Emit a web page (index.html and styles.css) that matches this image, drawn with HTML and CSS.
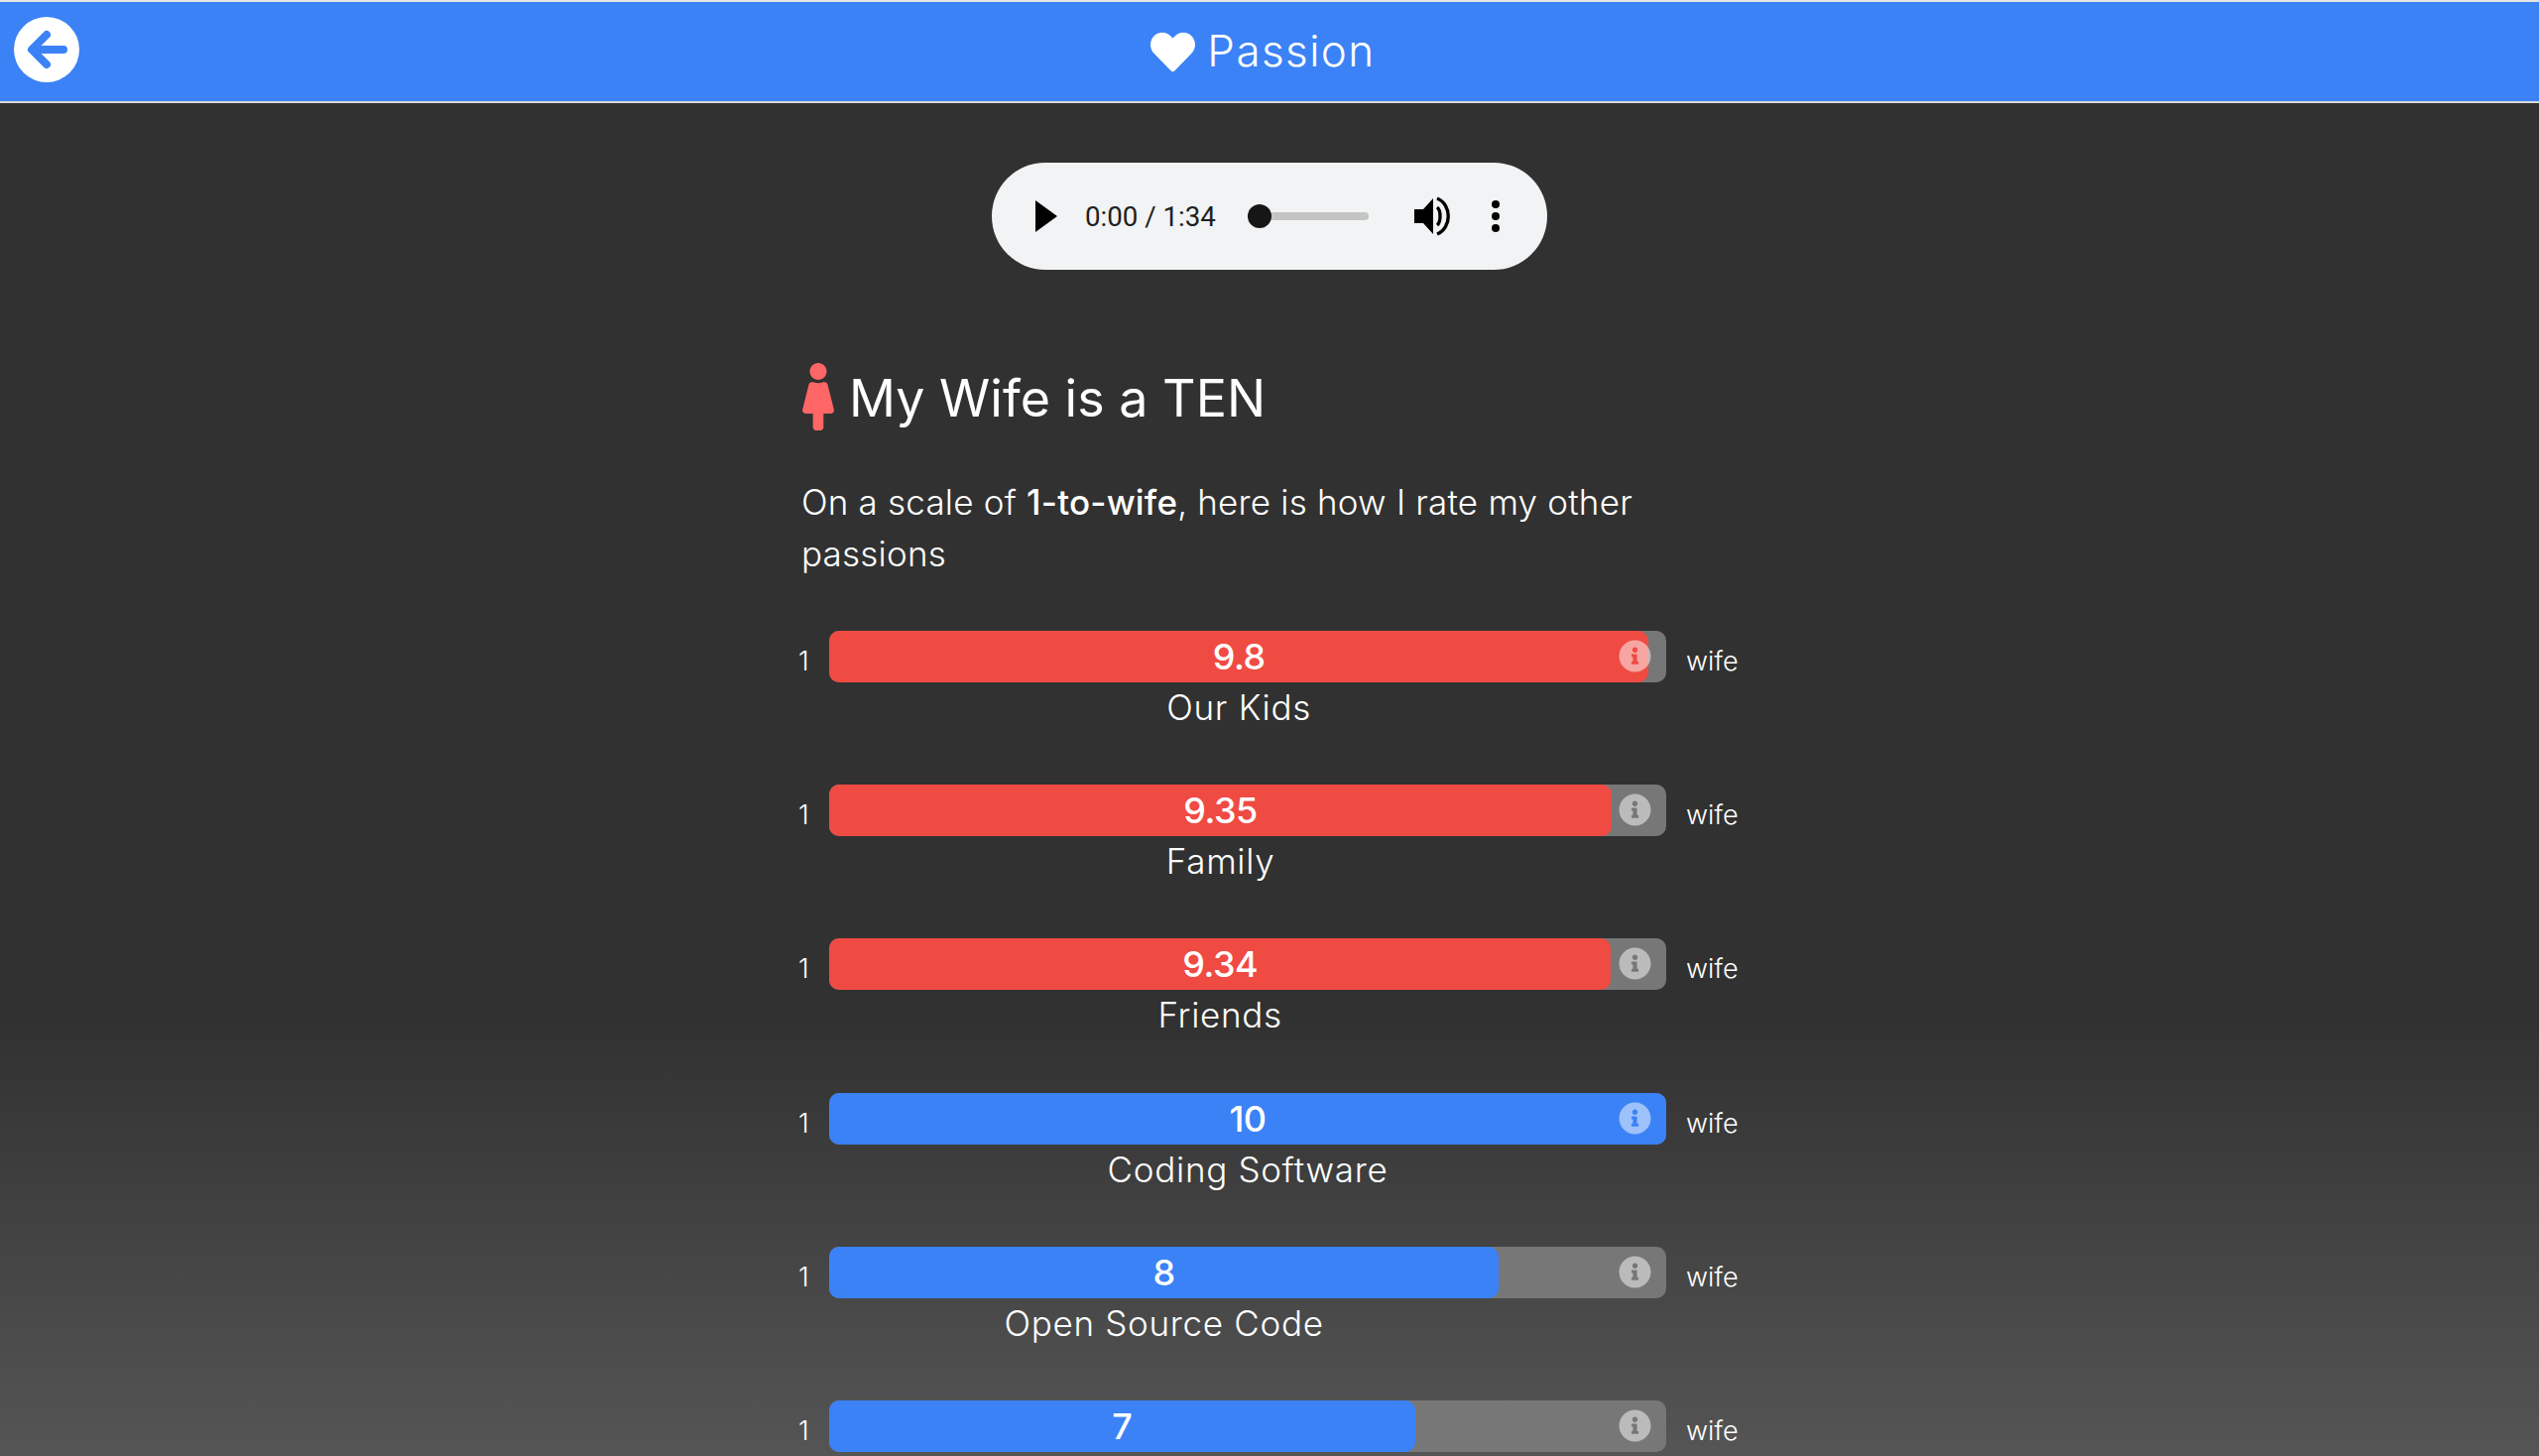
FILE: index.html
```html
<!DOCTYPE html>
<html>
<head>
    <title>Passion</title>
    <link rel="stylesheet" href="styles.css">
</head>
<body>
    <header class="topbar">
        <a class="back" href="#">
            <svg viewBox="0 0 66 66" width="66" height="66">
                <circle cx="33" cy="33" r="33" fill="#fff"/>
                <path d="M33 18 L18 33 L33 48 M19 33 H50" fill="none" stroke="#3b82f6" stroke-width="8" stroke-linecap="round" stroke-linejoin="round"/>
            </svg>
        </a>
        <h2 class="title">
            <svg viewBox="0 0 512 512" width="45" height="45"><path fill="#fff" d="M462.3 62.6C407.5 15.9 326 24.3 275.7 76.2L256 96.5l-19.7-20.3C186.1 24.3 104.5 15.9 49.7 62.6c-62.8 53.6-66.1 149.8-9.9 207.9l193.5 199.8c12.5 12.9 32.8 12.9 45.3 0l193.5-199.8c56.3-58.1 53-154.3-9.8-207.9z"/></svg>
            <span>Passion</span>
        </h2>
    </header>

    <div class="player">
        <svg class="play" viewBox="0 0 22 32" width="22" height="32"><path d="M0 0 L22 16 L0 32 Z" fill="#000"/></svg>
        <span class="time">0:00 / 1:34</span>
        <div class="seek"><div class="thumb"></div></div>
        <svg class="volume" viewBox="0 0 36 40" width="36" height="40">
            <path d="M0 13 H9 L19 2 V38 L9 27 H0 Z" fill="#000"/>
            <path d="M23 11 C27 14 27 26 23 29 M23 2 C38 8 38 32 23 38" fill="none" stroke="#000" stroke-width="3.4"/>
        </svg>
        <div class="dots"><i></i><i></i><i></i></div>
    </div>

    <main class="content">
        <h1 class="heading">
            <svg viewBox="0 0 256 512" width="34" height="68"><path fill="#ff6666" d="M128 0c35.346 0 64 28.654 64 64s-28.654 64-64 64c-35.346 0-64-28.654-64-64S92.654 0 128 0m119.283 354.179l-48-192A24 24 0 0 0 176 144h-11.36c-22.711 10.443-49.59 10.894-73.28 0H80a24 24 0 0 0-23.283 18.179l-48 192C4.935 369.305 16.383 384 32 384h56v104c0 13.255 10.745 24 24 24h32c13.255 0 24-10.745 24-24V384h56c15.591 0 27.071-14.671 23.283-29.821z"/></svg>
            <span>My Wife is a TEN</span>
        </h1>
        <p class="intro">On a scale of <strong>1-to-wife</strong>, here is how I rate my other<br>passions</p>

        <div id="rows"></div>
    </main>

    <script>
        const passions = [
            { name: "Our Kids", value: 9.8, width: 97.9, kind: "red" },
            { name: "Family", value: 9.35, width: 93.5, kind: "red" },
            { name: "Friends", value: 9.34, width: 93.4, kind: "red" },
            { name: "Coding Software", value: 10, width: 100, kind: "blue" },
            { name: "Open Source Code", value: 8, width: 80, kind: "blue" },
            { name: "", value: 7, width: 70, kind: "blue" }
        ];

        const infoIcon = `<svg class="info" viewBox="0 0 512 512" width="33" height="33"><path fill="rgba(255,255,255,0.5)" d="M256 8C119.043 8 8 119.083 8 256c0 136.997 111.043 248 248 248s248-111.003 248-248C504 119.083 392.957 8 256 8zm0 110c23.196 0 42 18.804 42 42s-18.804 42-42 42-42-18.804-42-42 18.804-42 42-42zm56 254c0 6.627-5.373 12-12 12h-88c-6.627 0-12-5.373-12-12v-24c0-6.627 5.373-12 12-12h12v-64h-12c-6.627 0-12-5.373-12-12v-24c0-6.627 5.373-12 12-12h64c6.627 0 12 5.373 12 12v100h12c6.627 0 12 5.373 12 12v24z"/></svg>`;

        document.getElementById("rows").innerHTML = passions.map(p => `
            <div class="row">
                <span class="end one">1</span>
                <div class="middle">
                    <div class="track">
                        <div class="fill ${p.kind}" style="width: ${p.width}%">${p.value}</div>
                        ${infoIcon}
                    </div>
                    <div class="label" style="width: ${p.width}%">${p.name}</div>
                </div>
                <span class="end wife">wife</span>
            </div>`).join("");
    </script>
</body>
</html>
```

FILE: styles.css
```css
html, body {
    height: 100%;
}

body {
    margin: 0;
    overflow: hidden;
    font-family: Inter, "Open Sans", sans-serif;
    font-weight: 300;
    color: white;
    background: linear-gradient(#313131 70%, #555555 100%);
}

/* Top bar */
.topbar {
    position: relative;
    height: 100px;
    display: flex;
    align-items: center;
    justify-content: center;
    background: #3b82f6;
    border-top: 2px solid #e5e5e5;
    border-bottom: 2px solid #d9d9d9;
}

.back {
    position: absolute;
    left: 14px;
    top: 15px;
    line-height: 0;
}

.title {
    margin: 0 13px 0 0;
    display: flex;
    align-items: center;
    gap: 12px;
    font-size: 44px;
    font-weight: 300;
    letter-spacing: 1.4px;
}

.title span {
    margin-bottom: 3px;
}

/* Audio player */
.player {
    box-sizing: border-box;
    width: 560px;
    height: 108px;
    margin: 60px auto 0;
    padding-left: 44px;
    display: flex;
    align-items: center;
    background: #f1f3f4;
    border-radius: 54px;
}

.time {
    margin-left: 28px;
    font-family: Roboto, "Liberation Sans", sans-serif;
    font-weight: 400;
    font-size: 27.7px;
    color: #1f1f1f;
}

.seek {
    position: relative;
    width: 122px;
    height: 8px;
    margin-left: 32px;
    background: #c4c4c4;
    border-radius: 4px;
}

.thumb {
    position: absolute;
    left: 0;
    top: -8px;
    width: 24px;
    height: 24px;
    background: #161616;
    border-radius: 50%;
}

.volume {
    margin-left: 46px;
}

.dots {
    margin-left: 42px;
    display: flex;
    flex-direction: column;
    gap: 4px;
}

.dots i {
    width: 8px;
    height: 8px;
    background: #000;
    border-radius: 50%;
}

/* Content */
.content {
    width: 944px;
    margin: 0 auto;
}

.heading {
    margin: 94px 0 0;
    display: flex;
    align-items: center;
    gap: 14px;
    font-size: 52px;
    font-weight: 400;
    line-height: 65px;
}

.heading span {
    padding-top: 3px;
}

.intro {
    margin: 46px 0 0;
    font-size: 35px;
    line-height: 52px;
    letter-spacing: 0.2px;
}

.intro strong {
    font-weight: 500;
}

#rows {
    margin-top: 52px;
}

.row {
    display: flex;
    height: 155.2px;
}

.end {
    flex: none;
    font-size: 27px;
    line-height: 62px;
}

.one {
    width: 31px;
    margin-left: -3px;
}

.middle {
    flex: none;
    width: 844px;
    margin-right: 20px;
}

.track {
    position: relative;
    height: 52px;
    background: #777777;
    border-radius: 10px;
}

.fill {
    height: 52px;
    line-height: 52px;
    border-radius: 10px;
    text-align: center;
    font-size: 36px;
    font-weight: 500;
    letter-spacing: -0.5px;
}

.red {
    background: #ef4b43;
}

.blue {
    background: #3b82f6;
}

.info {
    position: absolute;
    right: 15px;
    top: 9px;
}

.label {
    font-size: 35px;
    line-height: 50px;
    letter-spacing: 0.7px;
    text-align: center;
    white-space: nowrap;
}
```
